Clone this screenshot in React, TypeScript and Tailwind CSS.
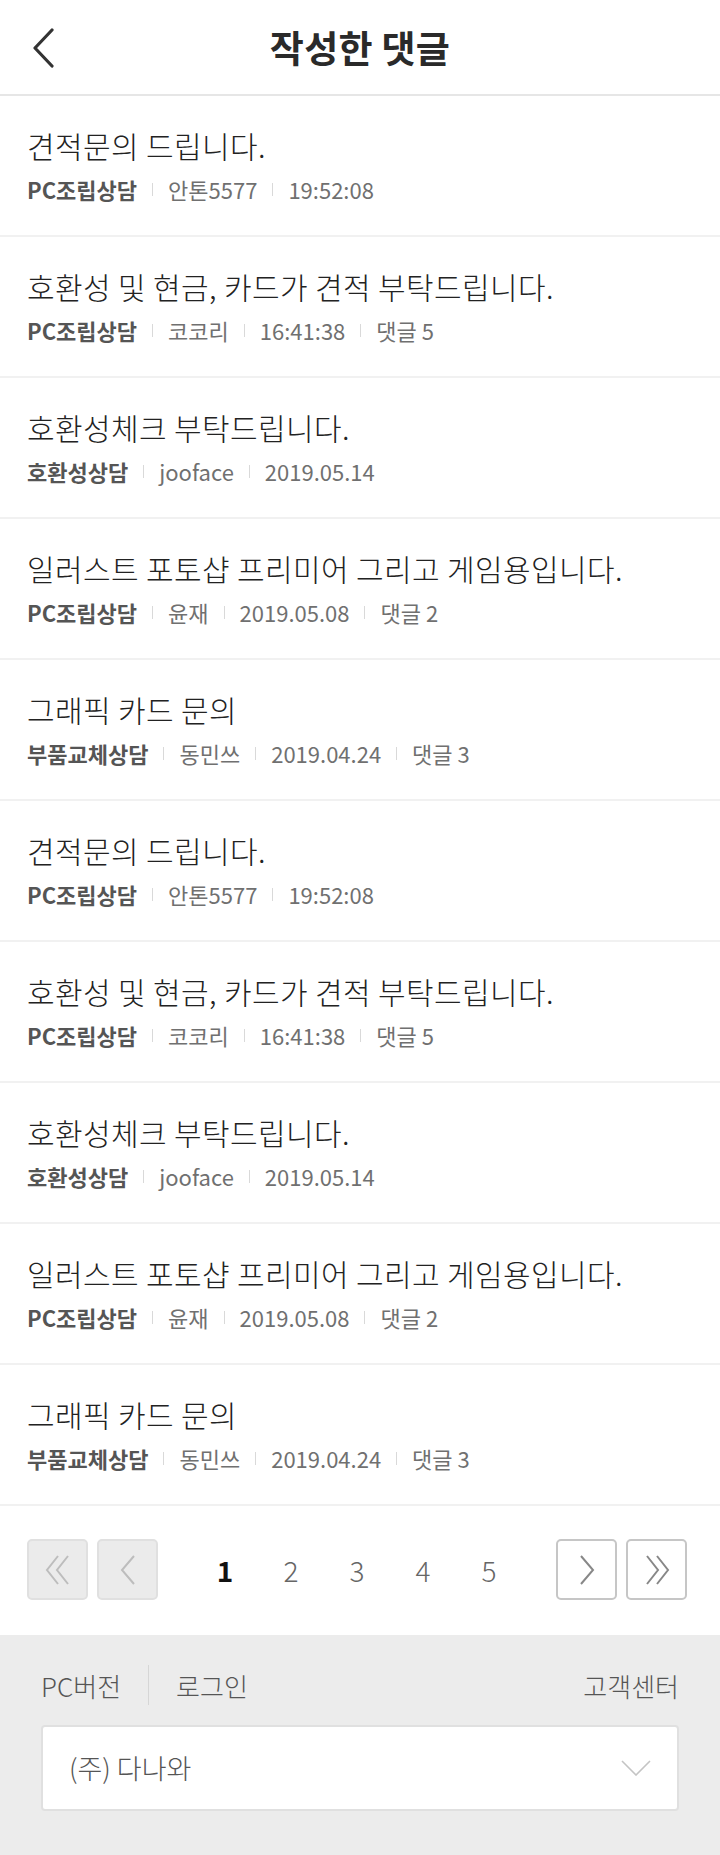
import {Fragment} from "react";

type Post = {
    title: string;
    board: string;
    author: string;
    date: string;
    comments?: number;
};

const posts: Post[] = [
    {title: "견적문의 드립니다.", board: "PC조립상담", author: "안톤5577", date: "19:52:08"},
    {title: "호환성 및 현금, 카드가 견적 부탁드립니다.", board: "PC조립상담", author: "코코리", date: "16:41:38", comments: 5},
    {title: "호환성체크 부탁드립니다.", board: "호환성상담", author: "jooface", date: "2019.05.14"},
    {title: "일러스트 포토샵 프리미어 그리고 게임용입니다.", board: "PC조립상담", author: "윤재", date: "2019.05.08", comments: 2},
    {title: "그래픽 카드 문의", board: "부품교체상담", author: "동민쓰", date: "2019.04.24", comments: 3},
];

const list = [...posts, ...posts];

function Chevron({dir, double, color}: {dir: "left" | "right"; double?: boolean; color: string}) {
    const flip = dir === "right" ? "scale(-1,1) translate(-30,0)" : undefined;
    return (
        <svg width="30" height="30" viewBox="0 0 30 30" fill="none" stroke={color} strokeWidth="2">
            <g transform={flip}>
                {double ? (
                    <>
                        <polyline points="15,1 4,15 15,29" />
                        <polyline points="25,1 14,15 25,29" />
                    </>
                ) : (
                    <polyline points="21,1 9,15 21,29" />
                )}
            </g>
        </svg>
    );
}

function Sep() {
    return <span className="mx-[15px] inline-block h-[13px] w-px bg-[#d9d9d9]" />;
}

export default function App() {
    const btnOff = "flex h-[61px] w-[61px] items-center justify-center rounded-[5px] border-2 border-[#e0e0e0] bg-[#ebebeb]";
    const btnOn = "flex h-[61px] w-[61px] items-center justify-center rounded-[5px] border-2 border-[#c6c6c6] bg-white";

    return (
        <div className="min-h-[1855px] bg-white font-['Noto_Sans_CJK_KR','Noto_Sans',sans-serif]">
            {/* header */}
            <div className="relative flex h-[96px] items-center justify-center border-b-2 border-[#e6e6e6]">
                <svg className="absolute left-[31px] top-[28px]" width="26" height="40" viewBox="0 0 26 40" fill="none" stroke="#333" strokeWidth="3.2" strokeLinecap="round" strokeLinejoin="round">
                    <polyline points="21,2 4,20 21,38" />
                </svg>
                <h1 className="text-[37px] font-bold leading-none tracking-[0.3px] text-[#2a2a2a]">작성한 댓글</h1>
            </div>

            {/* list */}
            <ul>
                {list.map((p, i) => (
                    <li key={i} className="h-[141px] border-b-2 border-[#f1f1f1] px-[27px] pt-[29px]">
                        <p className="text-[30px] font-light leading-[40px] tracking-[0.4px] text-[#222]">{p.title}</p>
                        <div className="mt-[9px] flex items-center text-[22px] leading-[30px] text-[#707070]">
                            <span className="font-bold text-[#555]">{p.board}</span>
                            <Sep />
                            <span>{p.author}</span>
                            <Sep />
                            <span>{p.date}</span>
                            {p.comments !== undefined && (
                                <Fragment>
                                    <Sep />
                                    <span>댓글 {p.comments}</span>
                                </Fragment>
                            )}
                        </div>
                    </li>
                ))}
            </ul>

            {/* pagination */}
            <div className="flex h-[129px] items-start pl-[27px] pr-[33px] pt-[33px]">
                <div className="flex gap-[9px]">
                    <div className={btnOff}><Chevron dir="left" double color="#bdbdbd" /></div>
                    <div className={btnOff}><Chevron dir="left" color="#bdbdbd" /></div>
                </div>
                <div className="flex h-[61px] flex-1 items-center justify-center">
                    {[1, 2, 3, 4, 5].map((n) => (
                        <span
                            key={n}
                            className={"w-[66px] text-center text-[28px] " + (n === 1 ? "font-bold text-[#111]" : "font-light text-[#666]")}
                        >
                            {n}
                        </span>
                    ))}
                </div>
                <div className="flex gap-[9px]">
                    <div className={btnOn}><Chevron dir="right" color="#888" /></div>
                    <div className={btnOn}><Chevron dir="right" double color="#888" /></div>
                </div>
            </div>

            {/* footer */}
            <div className="h-[220px] bg-[#ececec] px-[41px] pt-[30px]">
                <div className="flex h-[40px] items-center text-[26px] font-light text-[#555]">
                    <span>PC버전</span>
                    <span className="mx-[27px] h-[40px] w-px bg-[#d6d6d6]" />
                    <span>로그인</span>
                    <span className="ml-auto">고객센터</span>
                </div>
                <div className="mt-[20px] flex h-[86px] items-center justify-between rounded-[4px] border-2 border-[#e0e0e0] bg-white pl-[26px] pr-[26px]">
                    <span className="text-[27px] font-light text-[#555]">(주) 다나와</span>
                    <svg width="30" height="16" viewBox="0 0 30 16" fill="none" stroke="#c4c4c4" strokeWidth="1.6">
                        <polyline points="1,1 15,15 29,1" />
                    </svg>
                </div>
            </div>
        </div>
    );
}
